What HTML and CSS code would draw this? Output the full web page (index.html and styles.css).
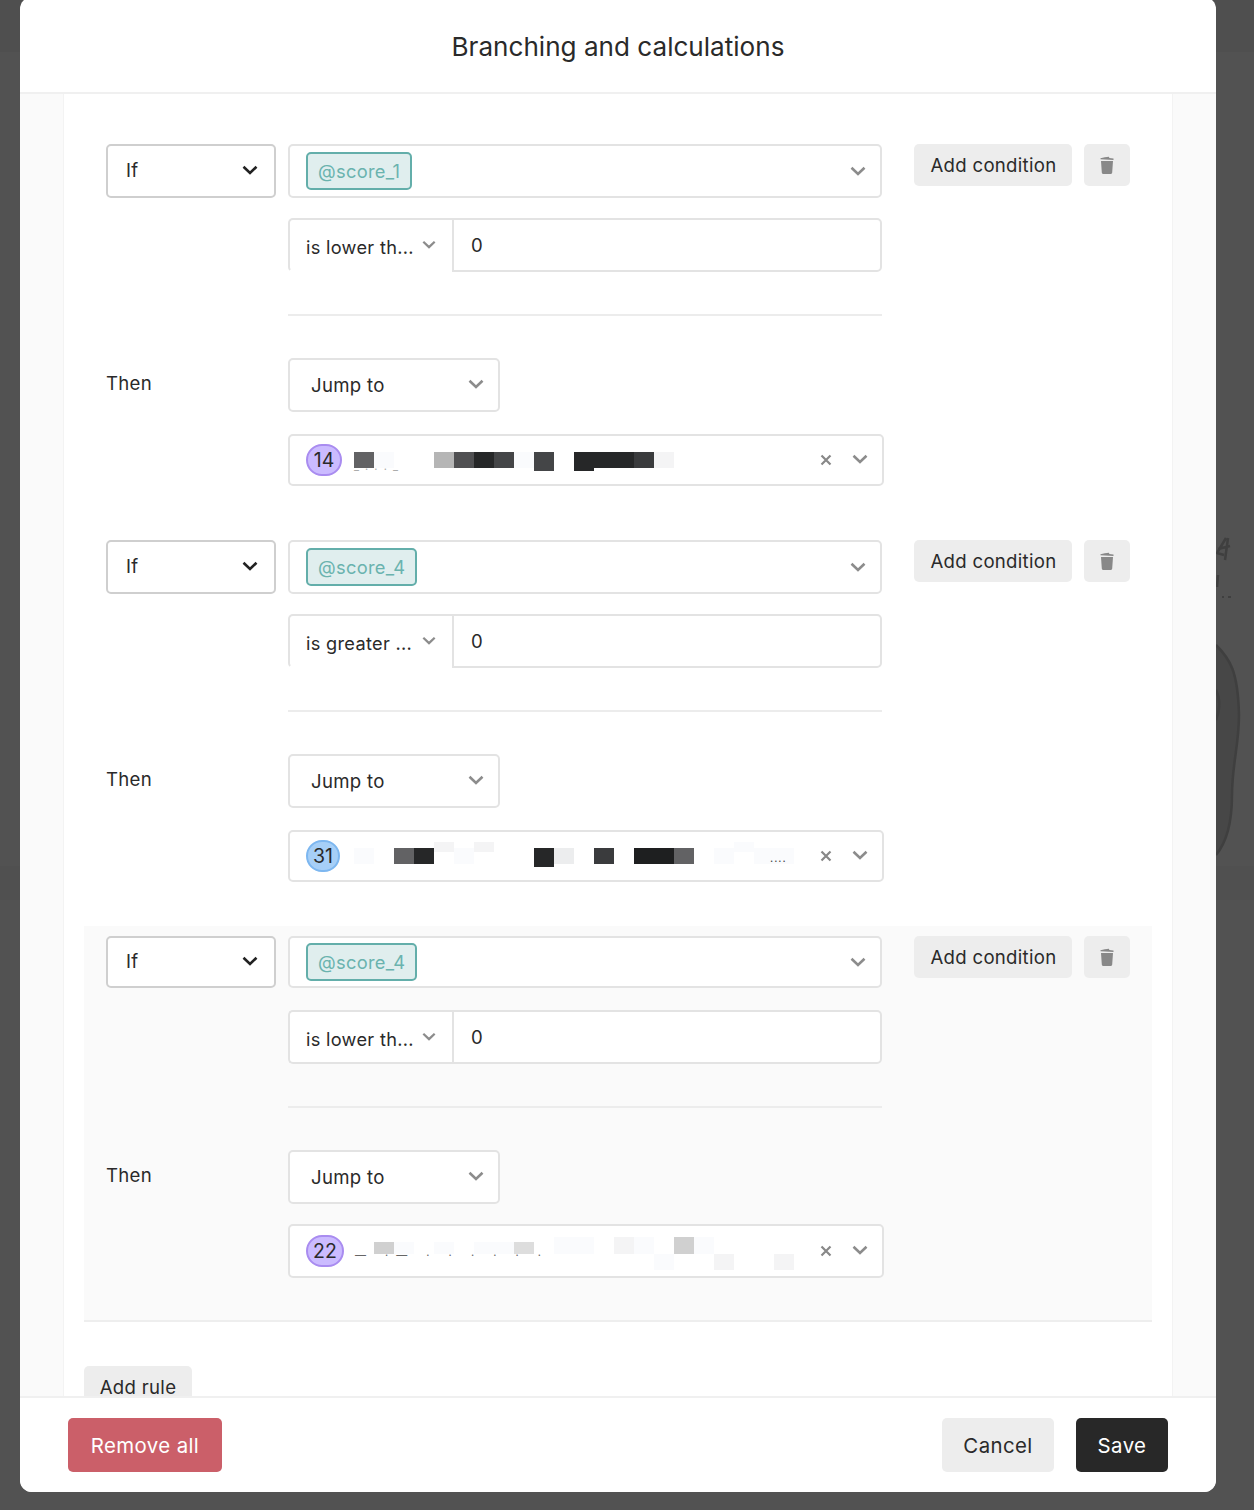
FILE: index.html
```html
<!DOCTYPE html>
<html lang="en">
<head>
<meta charset="utf-8">
<title>Branching and calculations</title>
<link rel="stylesheet" href="styles.css">
</head>
<body>
<svg class="sprite" aria-hidden="true">
  <symbol id="chev" viewBox="0 0 16 10"><path d="M1.500 1.800 8 8l6.500-6.200" fill="none" stroke="currentColor" stroke-width="2.600"/></symbol>
  <symbol id="cross" viewBox="0 0 12 12"><path d="M1.500 1.500l9 9M10.500 1.500l-9 9" fill="none" stroke="currentColor" stroke-width="2.200"/></symbol>
  <symbol id="trash" viewBox="0 0 14 18"><path d="M4.800 1.200 9 .8l.3 1.300 4.200.5v1.300L.5 3.300V2.200zM1 5h12l-.8 11.400c-.1.900-.7 1.500-1.600 1.500H3.400c-.9 0-1.500-.6-1.600-1.500z" fill="currentColor"/></symbol>
</svg>
<svg class="backdrop" viewBox="0 0 1254 1510" aria-hidden="true">
  <rect class="bd-top" width="1254" height="52"/>
  <rect class="bd-low" y="866" width="1254" height="34"/>
  <path class="bd-shape" d="M1216 645c14 14 22 26 23 70 0 30-7 50-7 80 0 30-6 48-16 60z"/>
  <path class="bd-line" d="M1216 645c14 14 22 26 23 70 0 30-7 50-7 80 0 30-6 48-16 60M1216 690c5 10 3 22 0 30M1218 549l12-3M1228 538l-3 22M1226 538l-9 15 7 2M1218 575l-1 12"/>
  <path class="bd-dots" d="M1222 597h2M1228 597h3"/>
</svg>
<main class="modal">
  <header class="modal-head"><h1>Branching and calculations</h1></header>
  <div class="modal-body">
    <div class="rules">

      <section class="rule">
        <div class="rule-row">
          <div class="select if-select"><span>If</span><svg class="chev dark"><use href="#chev"/></svg></div>
          <div class="fields">
            <div class="select wide"><span class="tag">@score_1</span><svg class="chev"><use href="#chev"/></svg></div>
            <div class="compare">
              <div class="op open"><span>is lower th...</span><svg class="chev"><use href="#chev"/></svg></div>
              <div class="value">0</div>
            </div>
          </div>
          <div class="actions">
            <button class="btn">Add condition</button>
            <button class="btn icon-btn"><svg class="trash"><use href="#trash"/></svg></button>
          </div>
        </div>
        <hr class="rule-sep">
        <div class="then-row">
          <div class="then-label">Then</div>
          <div class="fields">
            <div class="select jump"><span>Jump to</span><svg class="chev"><use href="#chev"/></svg></div>
            <div class="target">
              <span class="badge purple">14</span>
              <div class="mosaic">
                <i class="c6"></i><i class="c0"></i><i></i><i></i><i class="c7"></i><i class="c5"></i><i class="c2"></i><i class="c4"></i><i class="c0"></i><i class="c4 tall"></i><i></i><i class="c2 tall"></i><i class="c2"></i><i class="c2"></i><i class="c3"></i><i class="c1"></i>
              </div>
              <span class="trail trail-a">_ . . . _</span>
              <svg class="clear"><use href="#cross"/></svg><svg class="chev"><use href="#chev"/></svg>
            </div>
          </div>
        </div>
      </section>

      <section class="rule">
        <div class="rule-row">
          <div class="select if-select"><span>If</span><svg class="chev dark"><use href="#chev"/></svg></div>
          <div class="fields">
            <div class="select wide"><span class="tag">@score_4</span><svg class="chev"><use href="#chev"/></svg></div>
            <div class="compare">
              <div class="op open"><span>is greater ...</span><svg class="chev"><use href="#chev"/></svg></div>
              <div class="value">0</div>
            </div>
          </div>
          <div class="actions">
            <button class="btn">Add condition</button>
            <button class="btn icon-btn"><svg class="trash"><use href="#trash"/></svg></button>
          </div>
        </div>
        <hr class="rule-sep">
        <div class="then-row">
          <div class="then-label">Then</div>
          <div class="fields">
            <div class="select jump"><span>Jump to</span><svg class="chev"><use href="#chev"/></svg></div>
            <div class="target">
              <span class="badge blue">31</span>
              <div class="mosaic">
                <i class="c0"></i><i></i><i class="c6"></i><i class="c2"></i><i class="c1 up-s"></i><i class="c0"></i><i class="c1 up-s"></i><i></i><i></i><i class="c2 tall"></i><i class="c8"></i><i></i><i class="c3"></i><i></i><i class="c9"></i><i class="c9"></i><i class="c6"></i><i></i><i class="c0"></i><i class="c0 up-s"></i><i class="c0"></i><i class="c0"></i>
              </div>
              <span class="trail trail-b">....</span>
              <svg class="clear"><use href="#cross"/></svg><svg class="chev"><use href="#chev"/></svg>
            </div>
          </div>
        </div>
      </section>

      <section class="rule active">
        <div class="rule-row">
          <div class="select if-select short"><span>If</span><svg class="chev dark"><use href="#chev"/></svg></div>
          <div class="fields">
            <div class="select wide short"><span class="tag">@score_4</span><svg class="chev"><use href="#chev"/></svg></div>
            <div class="compare">
              <div class="op"><span>is lower th...</span><svg class="chev"><use href="#chev"/></svg></div>
              <div class="value">0</div>
            </div>
          </div>
          <div class="actions">
            <button class="btn">Add condition</button>
            <button class="btn icon-btn"><svg class="trash"><use href="#trash"/></svg></button>
          </div>
        </div>
        <hr class="rule-sep">
        <div class="then-row">
          <div class="then-label">Then</div>
          <div class="fields">
            <div class="select jump"><span>Jump to</span><svg class="chev"><use href="#chev"/></svg></div>
            <div class="target tall-target">
              <span class="badge purple wide-badge">22</span>
              <div class="mosaic">
                <i></i><i class="c10 mid"></i><i class="c0 mid"></i><i></i><i class="c0 mid"></i><i></i><i class="c0 mid"></i><i class="c0 mid"></i><i class="c11 mid"></i><i></i><i class="c0 up"></i><i class="c0 up"></i><i></i><i class="c1 up"></i><i class="c0 up"></i><i class="c0 low"></i><i class="c10 up"></i><i class="c0 up"></i><i class="c1 low"></i><i></i><i></i><i class="c1 low"></i>
              </div>
              <span class="trail trail-c">— ·— · · · · · ·</span>
              <svg class="clear"><use href="#cross"/></svg><svg class="chev"><use href="#chev"/></svg>
            </div>
          </div>
        </div>
      </section>

      <button class="btn add-rule">Add rule</button>
    </div>
  </div>
  <footer class="modal-foot">
    <button class="btn big danger">Remove all</button>
    <div class="foot-right">
      <button class="btn big">Cancel</button>
      <button class="btn big primary">Save</button>
    </div>
  </footer>
</main>
</body>
</html>
```
FILE: styles.css
```css
* { box-sizing: border-box; }
html, body { margin: 0; height: 1510px; overflow: hidden; }
body {
  position: relative;
  background: #525252;
  font-family: Inter, "Noto Sans", sans-serif;
  font-size: 18.6px;
  letter-spacing: .3px;
  color: #2a2a2a;
  padding: 0 38px 18px 20px;
}
.sprite { display: none; }
.backdrop { position: absolute; inset: 0; width: 1254px; height: 1510px; }
.bd-top { fill: #4f4f4f; }
.bd-low { fill: #505050; }
.bd-shape { fill: #474747; }
.bd-line { fill: none; stroke: #3f3f3f; stroke-width: 2.500; }
.bd-dots { fill: none; stroke: #3f3f3f; stroke-width: 2; }

.modal {
  position: relative;
  height: 1495px;
  margin-top: -3px;
  background: #fff;
  border-radius: 12px;
  display: flex;
  flex-direction: column;
  overflow: hidden;
}
.modal-head {
  flex: none;
  height: 97px;
  border-bottom: 2px solid #f0f0f0;
  display: flex;
  align-items: center;
  justify-content: center;
  padding-top: 3px;
}
.modal-head h1 {
  margin: 0;
  font-size: 26.100px;
  font-weight: 400;
  letter-spacing: 0;
}
.modal-body {
  flex: 1;
  min-height: 0;
  overflow: hidden;
  background: #fafafa;
  padding: 0 43px;
}
.rules {
  height: 100%;
  background: #fff;
  border-left: 1px solid #f3f3f3;
  border-right: 1px solid #f3f3f3;
  padding: 40px 20px 0;
}
.rule {
  height: 396px;
  padding: 10px 22px 0;
}
.rule.active {
  background: #fafafa;
  border-bottom: 2px solid #eeeeee;
}
.rule-row { display: flex; align-items: flex-start; }
.then-row { display: flex; align-items: flex-start; }
.then-label { flex: none; width: 182px; padding-top: 13px; line-height: 24px; }
.fields { flex: none; display: flex; flex-direction: column; width: 594px; }

.select {
  display: flex;
  align-items: center;
  justify-content: space-between;
  height: 54px;
  background: #fff;
  border: 2px solid #e3e3e3;
  border-radius: 5px;
}
.short { height: 52px; }
.if-select {
  flex: none;
  width: 170px;
  margin-right: 12px;
  padding: 0 16px 2px 18px;
  border-color: #cfcfcf;
}
.wide { padding: 0 14px 0 16px; margin-bottom: 20px; }
.wide.short { margin-bottom: 22px; }
.jump { width: 212px; padding: 0 14px 0 21px; margin-bottom: 22px; }
.jump .chev { margin-bottom: 2px; }
.then-row .jump + .tall-target { margin-top: -2px; }
.tag {
  display: block;
  height: 38px;
  line-height: 35px;
  padding: 0 10px;
  background: #e0eeee;
  border: 2px solid #63aeaa;
  border-radius: 5px;
  color: #6ab3ae;
  font-size: 18.300px;
}
.chev { width: 16px; height: 10px; color: #8c8c8c; flex: none; }
.chev.dark { color: #222; }
.compare { display: flex; height: 54px; }
.op {
  flex: none;
  width: 164px;
  display: flex;
  align-items: center;
  justify-content: space-between;
  padding: 0 16px 0 16px;
  background: #fff;
  border: 2px solid #e3e3e3;
  border-right: 0;
  border-radius: 5px 0 0 5px;
  font-size: 18.200px;
  white-space: nowrap;
}
.op.open { border-bottom-color: transparent; }
.op span { padding-top: 4px; }
.op .chev { width: 14px; height: 9px; margin-bottom: 2px; }
.value {
  flex: 1;
  display: flex;
  align-items: center;
  padding: 0 0 0 17px;
  background: #fff;
  border: 2px solid #e3e3e3;
  border-radius: 0 5px 5px 0;
}
.rule-sep {
  width: 594px;
  height: 2px;
  margin: 42px 0 42px 182px;
  border: 0;
  background: #ececec;
}

.target {
  position: relative;
  display: flex;
  align-items: center;
  width: 596px;
  height: 52px;
  padding: 0 14px 0 16px;
  background: #fff;
  border: 2px solid #e3e3e3;
  border-radius: 5px;
}
.target > .chev { margin-bottom: 2px; }
.tall-target { height: 54px; }
.badge {
  flex: none;
  width: 36px;
  height: 32px;
  line-height: 28px;
  text-align: center;
  border: 2px solid;
  border-radius: 16px;
  font-size: 19.500px;
  letter-spacing: 0;
  color: #2a2a2a;
}
.purple { background: #cbbbff; border-color: #a98cf0; }
.blue { width: 34px; background: #a6cff7; border-color: #7db7f0; }
.wide-badge { width: 38px; }
.mosaic {
  position: absolute;
  left: 64px;
  top: 16px;
  display: grid;
  grid-auto-flow: column;
  grid-auto-columns: 20px;
  grid-template-rows: 16px;
}
.mosaic i { display: block; }
.c0 { background: #fafbfd; }
.c1 { background: #f4f4f5; }
.c2 { background: #262728; }
.c3 { background: #3a3b3d; }
.c4 { background: #444547; }
.c5 { background: #505052; }
.c6 { background: #626264; }
.c7 { background: #b5b5b5; }
.c8 { background: #ecedee; }
.c9 { background: #1e1f20; }
.c10 { background: #d0d0d0; }
.c11 { background: #dddddd; }
.mosaic .tall { height: 19px; }
.mosaic .up-s { height: 10px; margin-top: -6px; }
.mosaic .mid { height: 12px; margin-top: 0; }
.mosaic .up { height: 17px; margin-top: -5px; }
.mosaic .low { height: 16px; margin-top: 12px; }
.trail {
  position: absolute;
  font-size: 11px;
  line-height: 12px;
  letter-spacing: 1.500px;
  color: #777;
  white-space: nowrap;
}
.trail-a { left: 64px; top: 24px; color: #aaa; }
.trail-b { left: 480px; top: 20px; letter-spacing: 1px; color: #444; }
.trail-c { left: 65px; top: 23px; letter-spacing: 8px; color: #666; }
.clear { width: 12px; height: 12px; margin-left: auto; margin-right: 20px; color: #888; flex: none; }

.actions { display: flex; gap: 12px; margin-left: 32px; }
.btn {
  height: 42px;
  padding: 0 16px 0 18px;
  background: #ededed;
  border: 0;
  border-radius: 5px;
  font: inherit;
  color: #2a2a2a;
  letter-spacing: .3px;
  white-space: nowrap;
}
.actions .btn:first-child { width: 158px; padding: 0 0 0 1px; }
.icon-btn {
  width: 46px;
  padding: 0;
  display: flex;
  align-items: center;
  justify-content: center;
}
.trash { width: 14px; height: 18px; color: #888; margin-right: 1px; }
.add-rule { margin-top: 44px; padding: 0; display: block; width: 108px; }

.modal-foot {
  flex: none;
  height: 96px;
  border-top: 2px solid #f0f0f0;
  background: #fff;
  padding: 20px 48px 0;
  display: flex;
  justify-content: space-between;
  align-items: flex-start;
}
.foot-right { display: flex; gap: 22px; }
.big { height: 54px; padding: 0 22px; font-size: 20.400px; letter-spacing: .4px; }
.danger { background: #cb5f69; color: #fff; width: 154px; padding: 0; }
.foot-right .big:first-child { width: 112px; padding: 0; }
.primary { background: #282828; color: #fff; width: 92px; padding: 0; }
```
